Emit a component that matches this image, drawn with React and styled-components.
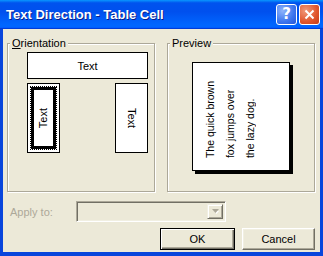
import styled, { createGlobalStyle } from "styled-components";

const GlobalStyle = createGlobalStyle`
  html, body {
    margin: 0;
    padding: 0;
    background: #fff;
  }
  body {
    font-family: "Liberation Sans", Arial, sans-serif;
    font-size: 11px;
    color: #000;
  }
`;

function App() {
  return (
    <>
      <GlobalStyle />
      <Window>
        <TitleBar>
          <Title>Text Direction - Table Cell</Title>
          <CaptionButton $kind="help">?</CaptionButton>
          <CaptionButton $kind="close">
            <svg width="11" height="11" viewBox="0 0 11 11">
              <path d="M1.5 1.5 L9.5 9.5 M9.5 1.5 L1.5 9.5" stroke="#fff" strokeWidth="2" />
            </svg>
          </CaptionButton>
        </TitleBar>

        <Client>
          <Groups>
            <Group>
              <Legend>
                <u>O</u>rientation
              </Legend>
              <OrientGrid>
                <OptionBox $wide>Text</OptionBox>
                <OptionBox $selected>
                  <FocusFrame>
                    <VText $up>Text</VText>
                  </FocusFrame>
                </OptionBox>
                <OptionBox $col={3}>
                  <VText>Text</VText>
                </OptionBox>
              </OrientGrid>
            </Group>

            <Group>
              <Legend>Preview</Legend>
              <PreviewArea>
                <Card>
                  <PreviewText>
                    The quick brown
                    <br />
                    fox jumps over
                    <br />
                    the lazy dog.
                  </PreviewText>
                </Card>
              </PreviewArea>
            </Group>
          </Groups>

          <ApplyRow>
            <DimLabel>Apply to:</DimLabel>
            <Combo>
              <DropButton>
                <svg width="7" height="5" viewBox="0 0 7 5">
                  <path d="M1 1 H6 L3.5 4 Z" fill="#fff" transform="translate(1 1)" />
                  <path d="M0 0 H7 L3.5 4 Z" fill="#aca899" />
                </svg>
              </DropButton>
            </Combo>
          </ApplyRow>

          <ButtonRow>
            <PushButton $default $width={75}>OK</PushButton>
            <PushButton $width={73}>Cancel</PushButton>
          </ButtonRow>
        </Client>
      </Window>
    </>
  );
}

export default App;

const Window = styled.div`
  width: 323px;
  height: 256px;
  display: flex;
  flex-direction: column;
  box-sizing: border-box;
  overflow: hidden;
`;

const TitleBar = styled.div`
  height: 29px;
  flex: none;
  display: flex;
  align-items: center;
  padding: 0 3px 0 6px;
  box-sizing: border-box;
  background: linear-gradient(
    180deg,
    #0997ff 0%,
    #0053ee 10%,
    #0050ee 40%,
    #0066ff 85%,
    #0066ff 92%,
    #005bff 95%,
    #003dd7 97%,
    #003dd7 100%
  );
`;

const Title = styled.div`
  flex: 1;
  color: #fff;
  font-family: "Liberation Sans", Arial, sans-serif;
  font-weight: bold;
  font-size: 13px;
  text-shadow: 1px 1px 0 #0a1e8a;
  white-space: nowrap;
`;

const CaptionButton = styled.div`
  width: 21px;
  height: 21px;
  box-sizing: border-box;
  margin-left: 2px;
  border: 1px solid #fff;
  border-radius: 3px;
  display: grid;
  place-items: center;
  color: #fff;
  font-family: "DejaVu Sans", sans-serif;
  font-weight: bold;
  font-size: 15px;
  line-height: 1;
  background: ${(p) =>
    p.$kind === "close"
      ? "radial-gradient(circle at 30% 30%, #f19a7b, #e0552c 60%, #c43d19)"
      : "radial-gradient(circle at 30% 30%, #8fb4fb, #3c75ee 60%, #2456d8)"};
`;

const Client = styled.div`
  flex: 1;
  display: flex;
  flex-direction: column;
  background: #ece9d8;
  border-style: solid;
  border-color: #0845dc;
  border-width: 0 3px 4px 3px;
  padding: 8px 5px 2px 4px;
`;

const Groups = styled.div`
  display: grid;
  grid-template-columns: 148px 148px;
  column-gap: 12px;
`;

const Group = styled.fieldset`
  margin: 0;
  padding: 0;
  min-width: 0;
  border: 1px solid #aca899;
  box-shadow: inset 1px 1px 0 #fff, 1px 1px 0 #fff;
`;

const Legend = styled.legend`
  margin-left: 2px;
  padding: 0 2px;
  font-size: 11px;
  line-height: 13px;
  background: #ece9d8;
`;

const OrientGrid = styled.div`
  height: 141px;
  box-sizing: border-box;
  padding: 2px 0 0 19px;
  display: grid;
  grid-template-columns: 33px 55px 33px;
  grid-template-rows: 27px 70px;
  row-gap: 4px;
  width: 140px;
  align-content: start;
`;

const OptionBox = styled.div`
  grid-column: ${(p) => (p.$wide ? "1 / -1" : p.$col || "auto")};
  background: #fff;
  border: 1px solid #000;
  box-sizing: border-box;
  display: flex;
  align-items: center;
  justify-content: center;
  padding: ${(p) => (p.$selected ? "2px" : "0")};
  font-size: 11px;
`;

const FocusFrame = styled.div`
  align-self: stretch;
  flex: 1;
  border: 1px dotted #000;
  box-shadow: inset 0 0 0 3px #000;
  display: flex;
  align-items: center;
  justify-content: center;
`;

const VText = styled.span`
  writing-mode: vertical-rl;
  transform: ${(p) => (p.$up ? "rotate(180deg)" : "none")};
  font-size: 11px;
  line-height: 13px;
`;

const PreviewArea = styled.div`
  height: 141px;
  box-sizing: border-box;
  padding-top: 12px;
  display: flex;
  justify-content: center;
  align-items: flex-start;
`;

const Card = styled.div`
  width: 98px;
  height: 109px;
  box-sizing: border-box;
  border: 1px solid #000;
  background: #fff;
  box-shadow: 3px 3px 0 #000;
  display: flex;
  align-items: flex-end;
  padding: 0 0 12px 7px;
`;

const PreviewText = styled.div`
  writing-mode: vertical-rl;
  transform: rotate(180deg);
  font-size: 10.5px;
  line-height: 20px;
  white-space: nowrap;
`;

const ApplyRow = styled.div`
  margin-top: 9px;
  display: flex;
  align-items: center;
  padding-left: 3px;
`;

const DimLabel = styled.span`
  width: 66px;
  color: #aca899;
  font-size: 11px;
`;

const Combo = styled.div`
  width: 150px;
  height: 21px;
  box-sizing: border-box;
  border: 1px solid;
  border-color: #aca899 #fff #fff #aca899;
  box-shadow: inset 1px 1px 0 #716f64, inset -1px -1px 0 #f1efe2;
  background: #ece9d8;
  padding: 2px;
  display: flex;
  justify-content: flex-end;
`;

const DropButton = styled.div`
  width: 16px;
  box-sizing: border-box;
  border: 1px solid;
  border-color: #f1efe2 #716f64 #716f64 #f1efe2;
  box-shadow: inset 1px 1px 0 #fff, inset -1px -1px 0 #aca899;
  display: grid;
  place-items: center;
`;

const ButtonRow = styled.div`
  margin-top: 6px;
  display: flex;
  justify-content: flex-end;
  gap: 7px;
`;

const PushButton = styled.button`
  width: ${(p) => p.$width}px;
  height: 22px;
  box-sizing: border-box;
  margin: 0;
  padding: 0;
  background: #ece9d8;
  font-family: "Liberation Sans", Arial, sans-serif;
  font-size: 11px;
  color: #000;
  border: 1px solid;
  border-color: ${(p) => (p.$default ? "#000" : "#fff #716f64 #716f64 #fff")};
  box-shadow: ${(p) =>
    p.$default
      ? "inset 1px 1px 0 #fff, inset -1px -1px 0 #716f64, inset -2px -2px 0 #aca899"
      : "inset -1px -1px 0 #aca899, inset 1px 1px 0 #f1efe2"};
`;
